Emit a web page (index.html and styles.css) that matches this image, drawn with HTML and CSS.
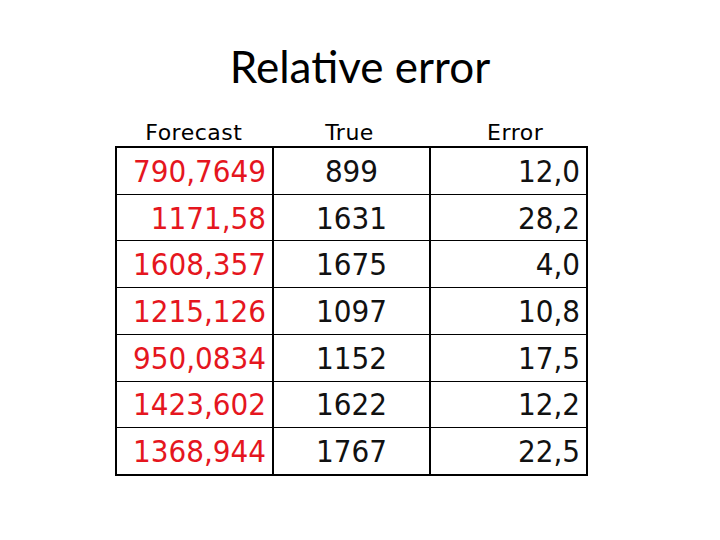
FILE: index.html
```html
<!DOCTYPE html>
<html>
<head>
<meta charset="utf-8">
<link rel="stylesheet" href="styles.css">
</head>
<body>
<div class="slide">
  <h1 class="title">Relative error</h1>
  <div class="block">
    <div class="heads">
      <div class="head">Forecast</div>
      <div class="head head-true">True</div>
      <div class="head head-error">Error</div>
    </div>
    <div class="grid">
      <div class="cell fc">790,7649</div><div class="cell tr">899</div><div class="cell er">12,0</div>
      <div class="cell fc">1171,58</div><div class="cell tr">1631</div><div class="cell er">28,2</div>
      <div class="cell fc">1608,357</div><div class="cell tr">1675</div><div class="cell er">4,0</div>
      <div class="cell fc">1215,126</div><div class="cell tr">1097</div><div class="cell er">10,8</div>
      <div class="cell fc">950,0834</div><div class="cell tr">1152</div><div class="cell er">17,5</div>
      <div class="cell fc">1423,602</div><div class="cell tr">1622</div><div class="cell er">12,2</div>
      <div class="cell fc">1368,944</div><div class="cell tr">1767</div><div class="cell er">22,5</div>
    </div>
  </div>
</div>
</body>
</html>
```
FILE: styles.css
```css
html, body {
  margin: 0;
  padding: 0;
  background: #fff;
}
.slide {
  width: 720px;
  height: 540px;
  display: flex;
  flex-direction: column;
}
.title {
  margin: 40px 0 0 0;
  text-align: center;
  font-family: Lato, "Liberation Sans", sans-serif;
  font-weight: normal;
  font-size: 44px;
  line-height: 52px;
  color: #000;
}
.block {
  margin: 28px 0 0 115px;
  width: 473px;
}
.heads {
  display: grid;
  grid-template-columns: repeat(3, 1fr);
  height: 26px;
}
.head {
  text-align: center;
  font-family: "DejaVu Sans", sans-serif;
  font-weight: normal;
  font-size: 22px;
  letter-spacing: 0.5px;
  line-height: 26px;
  color: #000;
}
.head-true {
  padding-right: 4px;
}
.head-error {
  padding-left: 12px;
}
.grid {
  display: grid;
  grid-template-columns: repeat(3, 155px);
  grid-template-rows: repeat(7, 1fr);
  column-gap: 2px;
  row-gap: 1px;
  padding: 2px;
  height: 326px;
  background: #000;
}
.cell {
  background: #fff;
  display: flex;
  align-items: center;
  padding: 0 6px;
  font-family: "DejaVu Sans Condensed", "DejaVu Sans", sans-serif;
  font-stretch: condensed;
  font-size: 31px;
  color: #111;
}
.fc {
  justify-content: flex-end;
  color: #e5161e;
}
.tr {
  justify-content: center;
}
.er {
  justify-content: flex-end;
}
```
